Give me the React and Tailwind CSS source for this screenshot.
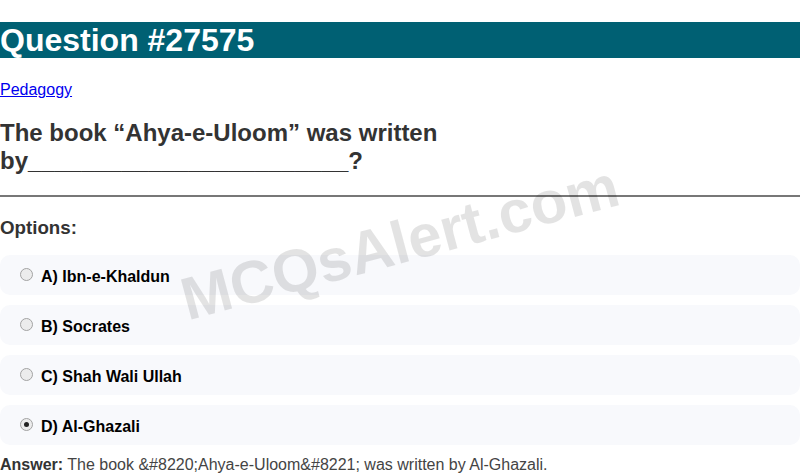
export default function App() {
  const options = [
    { label: "A) Ibn-e-Khaldun", checked: false },
    { label: "B) Socrates", checked: false },
    { label: "C) Shah Wali Ullah", checked: false },
    { label: "D) Al-Ghazali", checked: true },
  ];
  return (
    <div className="relative overflow-hidden bg-white text-[16px] leading-[1.15] text-[#333]" style={{ fontFamily: '"Liberation Sans", Arial, sans-serif' }}>
      <h1 className="mt-[22px] mb-[23px] bg-[#006073] text-[32px] font-bold leading-[36px] text-white">Question #27575</h1>
      <p className="leading-[18.4px]">
        <a href="#" className="text-[#0000ee] underline">Pedagogy</a>
      </p>
      <h2 className="mt-[20px] mb-[20px] text-[24px] font-bold leading-[27.6px] text-[#333]">
        The book “Ahya-e-Uloom” was written
        <br />
        by________________________?
      </h2>
      <hr className="border-0 border-t-2 border-[#777]" />
      <h3 className="mt-[20px] mb-[17px] text-[18.72px] font-bold leading-[21.5px] text-[#333]">Options:</h3>
      <div className="flex flex-col gap-[10px]">
        {options.map((o) => (
          <div key={o.label} className="flex h-[40px] items-center gap-[8px] rounded-[10px] bg-[#f8f9fc] pl-[20px]">
            <span className="mb-[1px] flex h-[13px] w-[13px] items-center justify-center rounded-full border border-[#a3a3a3] bg-[#ececec]">
              {o.checked && <span className="h-[5px] w-[5px] rounded-full bg-[#222]" />}
            </span>
            <span className="mt-[4px] font-bold text-black">{o.label}</span>
          </div>
        ))}
      </div>
      <p className="mt-[11px] leading-[18.4px] text-[#444]">
        <b className="text-[#333]">Answer:</b> The book &amp;#8220;Ahya-e-Uloom&amp;#8221; was written by Al-Ghazali.
      </p>
      <div className="pointer-events-none absolute left-[400px] top-[243px] -translate-x-1/2 -translate-y-1/2 -rotate-[15deg] whitespace-nowrap text-[60px] font-bold leading-none text-[rgba(0,0,0,0.11)]">
        MCQsAlert.com
      </div>
    </div>
  );
}
